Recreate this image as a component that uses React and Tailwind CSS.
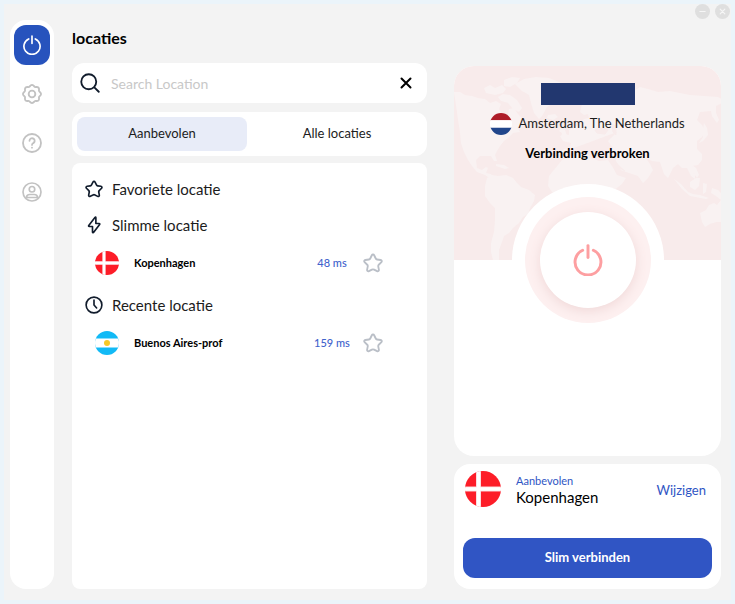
import { useState } from 'react';

const STAR_PATH =
  'M10.6 2.700c.6-1.200 2.200-1.200 2.800 0l1.900 3.900c.3.600.9 1.100 1.600 1.200l4.300.6c1.300.2 1.800 1.700.9 2.600l-3.200 3.100c-.5.5-.7 1.200-.6 1.900l.8 4.200c.2 1.300-1.100 2.200-2.200 1.600l-3.600-1.900c-.8-.4-1.800-.4-2.600 0l-3.600 1.900c-1.100.6-2.400-.3-2.200-1.600l.8-4.200c.1-.7-.1-1.400-.6-1.900L1.900 11c-.9-.9-.4-2.400.9-2.600l4.300-.6c.7-.1 1.300-.6 1.600-1.200z';

function Icon({ className, width = 2.2, children }) {
  return (
    <svg
      viewBox="0 0 24 24"
      fill="none"
      stroke="currentColor"
      strokeWidth={width}
      strokeLinecap="round"
      strokeLinejoin="round"
      aria-hidden="true"
      className={className}
    >
      {children}
    </svg>
  );
}

function StarIcon({ className }) {
  return (
    <Icon className={className}>
      <path d={STAR_PATH} />
    </Icon>
  );
}

function PowerIcon({ className, width }) {
  return (
    <Icon className={className} width={width}>
      <path d="M12 1.200v9" />
      <path d="M8 4.700a9.700 9.700 0 1 0 8 0" />
    </Icon>
  );
}

function GearIcon() {
  const teeth = [0, 45, 90, 135, 180, 225, 270, 315];
  const point = (deg, r) => {
    const a = (deg * Math.PI) / 180;
    return `${(12 + r * Math.cos(a)).toFixed(2)} ${(12 + r * Math.sin(a)).toFixed(2)}`;
  };
  const d =
    `M${point(-22.5, 9.2)}` +
    teeth.map((t) => `C${point(t - 14, 9.2)} ${point(t - 13, 10.9)} ${point(t, 10.9)}C${point(t + 13, 10.9)} ${point(t + 14, 9.2)} ${point(t + 22.5, 9.2)}`).join('') +
    'Z';
  return (
    <Icon className="size-5">
      <path d={d} />
      <circle cx="12" cy="12" r="4" />
    </Icon>
  );
}

function HelpIcon() {
  return (
    <Icon className="size-5">
      <circle cx="12" cy="12" r="10.800" />
      <path d="M9 9.300a3.100 3.100 0 1 1 4.600 2.800c-1 .6-1.600 1.100-1.600 2.200" />
      <path d="M12 17.500v.1" />
    </Icon>
  );
}

function UserIcon() {
  return (
    <Icon className="size-5" width={2}>
      <circle cx="12" cy="12" r="10.800" />
      <circle cx="12" cy="8.700" r="3.300" />
      <path d="M5.500 18.400c0-2.200 1.700-3.400 3.800-3.400h5.400c2.100 0 3.800 1.200 3.800 3.400" />
      <path d="M5.500 18.600h13" />
    </Icon>
  );
}

function DenmarkFlag({ className }) {
  return (
    <svg viewBox="0 0 36 36" role="img" aria-label="Denemarken" className={className}>
      <clipPath id="flag-dk">
        <circle cx="18" cy="18" r="18" />
      </clipPath>
      <g clipPath="url(#flag-dk)">
        <path fill="#fd1d28" d="M0 0h36v36H0z" />
        <path d="M13.500 0v36M0 18h36" stroke="#fbd5d7" strokeWidth="5" />
        <path d="M13.500 0v36M0 18h36" stroke="#fff" strokeWidth="3.400" />
      </g>
    </svg>
  );
}

function ArgentinaFlag({ className }) {
  return (
    <svg viewBox="0 0 24 24" role="img" aria-label="Argentinië" className={className}>
      <clipPath id="flag-ar">
        <circle cx="12" cy="12" r="12" />
      </clipPath>
      <g clipPath="url(#flag-ar)">
        <path fill="#12baf6" d="M0 0h24v24H0z" />
        <path fill="#fff" d="M0 7.500h24v9H0z" />
        <circle cx="12" cy="12" r="3" fill="#f6c928" />
      </g>
    </svg>
  );
}

function NetherlandsFlag({ className }) {
  return (
    <svg viewBox="0 0 24 24" role="img" aria-label="Nederland" className={className}>
      <clipPath id="flag-nl">
        <circle cx="12" cy="12" r="12" />
      </clipPath>
      <g clipPath="url(#flag-nl)">
        <path fill="#ae1c28" d="M0 0h24v8H0z" />
        <path fill="#fff" d="M0 8h24v8H0z" />
        <path fill="#21468b" d="M0 16h24v8H0z" />
      </g>
    </svg>
  );
}

function WorldMap() {
  return (
    <svg viewBox="0 0 267 194" preserveAspectRatio="xMidYMax slice" aria-hidden="true" className="absolute inset-0 size-full">
      <g fill="#f9f2f2">
        <path d="M0 26l6 0 5 3 7 1 6 2 7 1 5 4 6-2 5 3-2 5 4 6 5 1 1-7 5-1 4 6 5 6-2 6-4 1 3 5-7 1-5 5-4 3-4 5-3 5-2 4 2 6-3 0-3-5-6 0-5 0-4 4 1 8 5 2 4-3 2 1-2 5 5 1 3 4-3 1-6-4-8-3-5-6-4-6-4-8-3-9-1-10z" />
        <path d="M30 22l6-3 5 3 7-3 4 4-3 4-8 2-9-2zM44 31l5-3 7 1 7 5 5 8-3 4-6-3-5-6-7-2zM50 14l8-3 8 1-3 5-7 4-6-1z" />
        <path d="M61 18l9-5 12-2 13 1 10 4 7 4-3 9-7 6-9 6-5 9-3 3-5-6-3-10-2-8-7-4zM42 98l8 1 5 3-4 1-9-3z" />
        <path d="M33 112l5-3 6 1 8-1 7 3 4 5 4 4 8 3 6 5-1 6-4 7-2 6-5 3-4 6-6 5-4 5-5 3-2 6-3 8 0 10-6 0-2-8 0-9 3-11 1-12 0-12-5-5-5-7 0-10z" />
        <path d="M104 88l6-5 6-1 1-5-8-2-3-5 5-2 4 1 0-5 6-3 5-3 4-5 5-1-1-4-4 1-4-3 2-8 7-8 8-4 8 2 5 6 4-2 5 2 4-6 8-1 9-6 8 2 10 3 12-1 10 2 10 2 14 1 14 1 7 4-5 3-4 2 0 7 3 7-2 3-5-7-1-5-11 1-3 8 5 5 3 6-3 6-5 4 0 8 5 5 0 6-4 5-6 1 3 7 0 6-4-3-4-8-5 0-4-4-5 4-5 10-4-4-4-12-8-1-6-3 4 6 3 6-5 8-5 5-5-7-15-5-2-1-5-9-1-4-6-5 4-4-5-7 3-3 6-6 2z" />
        <path d="M108 94l6-3 10-2 9-1 4 4 8 3 9-1 4 6 5 9 9 3-4 6-9 7-7 9-2 14-10 14-10 1-5-10 0-12-5-10-7-4-8 2-7-3-4-6 1-10z" />
        <path d="M107 62l4 2 2 6-6 1 1-4-3-2zM94 49l7-1 3 3-5 3-6-2zM250 57l3 5 1 7-5 6-4 2 4-6 0-7zM238 99l4 3 3 7-2 3-4-6z" />
        <path d="M220 113l7 5 7 8 5 2 7 1 9 3-3 1-16-3-8-7zM236 116l6-4 4 0-1 8-4 4-5-3zM249 117l4 1-1 8-3 2zM258 122l6 2 3 3 0 7-5-4-5-3z" />
        <path d="M246 147l6-3 3-5 5-2 3 2 4-5 0 22-4 0-7 2-5 3-3-5z" />
      </g>
      <path d="M141 64l7-3 6 3-3 4-8-1zM158 58l4 2 0 9-3-3zM158 92l5 8 8 5M168 86l7 6" fill="#f8ebeb" stroke="#f8ebeb" strokeWidth="1" />
    </svg>
  );
}

function NavButton({ label, children }) {
  return (
    <button type="button" aria-label={label} className="flex h-[49px] w-full items-center justify-center text-[#c2c2c2]">
      {children}
    </button>
  );
}

function Sidebar() {
  return (
    <nav aria-label="Hoofdmenu" className="mt-4 flex w-11 shrink-0 flex-col items-center rounded-2xl bg-white pt-[5px]">
      <button type="button" aria-label="VPN" className="mb-1 flex h-10 w-9 items-center justify-center rounded-xl bg-[#2753bd] text-white">
        <PowerIcon className="size-5" width={2} />
      </button>
      <NavButton label="Instellingen">
        <GearIcon />
      </NavButton>
      <NavButton label="Help">
        <HelpIcon />
      </NavButton>
      <NavButton label="Account">
        <UserIcon />
      </NavButton>
    </nav>
  );
}

function GroupHeading({ icon, children }) {
  return (
    <h2 className="flex h-9 items-center gap-2 pl-3 text-[15px] text-[#1c1c1c]">
      <span className="flex w-5 justify-center text-[#111c2c]">{icon}</span>
      {children}
    </h2>
  );
}

function LocationRow({ flag, name, ping }) {
  return (
    <div className="flex h-10 items-center pr-11 pl-[23px]">
      {flag}
      <span className="ml-[15px] flex-1 text-[11px] font-bold text-black">{name}</span>
      <span className="mr-1 w-[54px] text-center text-[11px] font-medium text-[#3f63cc]">{ping}</span>
      <button type="button" aria-label={`${name} als favoriet`} className="text-[#babfc7]">
        <StarIcon className="size-5" />
      </button>
    </div>
  );
}

function Locations() {
  const [tab, setTab] = useState('recommended');
  const [query, setQuery] = useState('');
  const tabClass = (active) =>
    active ? 'flex-1 rounded-lg bg-[#e8ecf8] text-[13px] text-[#1c1c1c]' : 'flex-1 rounded-lg text-[13px] text-[#1c1c1c]';
  return (
    <main className="ml-[18px] flex min-w-0 flex-1 flex-col pt-6">
      <h1 className="mb-[15px] text-[16px] leading-5 font-bold text-black">locaties</h1>
      <div className="flex h-10 shrink-0 items-center rounded-xl bg-white pr-[15px] pl-2">
        <label htmlFor="search" className="text-[#111c2c]">
          <Icon className="size-5">
            <circle cx="10.500" cy="10.500" r="9" />
            <path d="M17.500 17.500l5 5" />
          </Icon>
        </label>
        <input
          id="search"
          type="text"
          aria-label="Zoek locatie"
          value={query}
          onChange={(e) => setQuery(e.target.value)}
          placeholder="Search Location"
          className="ml-[11px] h-full min-w-0 flex-1 bg-transparent text-[14px] text-[#1c1c1c] outline-none placeholder:text-[#c8c8c8]"
        />
        <button type="button" aria-label="Wissen" onClick={() => setQuery('')} className="text-black">
          <Icon className="size-3" width={4}>
            <path d="M3 3l18 18M21 3L3 21" />
          </Icon>
        </button>
      </div>
      <div role="tablist" className="mt-[9px] flex h-11 shrink-0 gap-[5px] rounded-xl bg-white p-[5px]">
        <button type="button" role="tab" aria-selected={tab === 'recommended'} onClick={() => setTab('recommended')} className={tabClass(tab === 'recommended')}>
          Aanbevolen
        </button>
        <button type="button" role="tab" aria-selected={tab === 'all'} onClick={() => setTab('all')} className={tabClass(tab === 'all')}>
          Alle locaties
        </button>
      </div>
      <section className="mt-[7px] flex-1 rounded-lg bg-white pt-2">
        <GroupHeading icon={<StarIcon className="size-[18px]" />}>Favoriete locatie</GroupHeading>
        <GroupHeading
          icon={
            <Icon className="size-[18px]">
              <path d="M13.500 1.800L5 12.600c-.5.700-.2 1.400.6 1.400H10v7.200c0 1.100 1 1.400 1.600.6L19.500 11.400c.5-.7.200-1.400-.6-1.400H14.500V2.200c0-.8-.5-.9-1-.4z" />
            </Icon>
          }
        >
          Slimme locatie
        </GroupHeading>
        <LocationRow flag={<DenmarkFlag className="size-6" />} name="Kopenhagen" ping="48 ms" />
        <div className="mt-1">
          <GroupHeading
            icon={
              <Icon className="size-[18px]">
                <circle cx="12" cy="12" r="10.500" />
                <path d="M12 5.500V12l3.500 4" />
              </Icon>
            }
          >
            Recente locatie
          </GroupHeading>
          <LocationRow flag={<ArgentinaFlag className="size-6" />} name="Buenos Aires-prof" ping="159 ms" />
        </div>
      </section>
    </main>
  );
}

function StatusCard() {
  return (
    <section className="flex-1 overflow-hidden rounded-[20px] bg-white">
      <div className="relative flex h-[194px] flex-col items-center bg-[#f8ebeb] pt-[17px]">
        <WorldMap />
        <div className="relative h-[22px] w-[94px] bg-[#22376f]" />
        <p className="relative mt-2 flex h-[22px] items-center gap-[6px] text-[13px] text-[#1c1c1c]">
          <NetherlandsFlag className="size-[22px]" />
          Amsterdam, The Netherlands
        </p>
        <p className="relative mt-2 text-[13px] leading-5 font-bold text-black">Verbinding verbroken</p>
        <div className="absolute bottom-0 left-1/2 flex size-[152px] -translate-x-1/2 translate-y-1/2 items-center justify-center rounded-full bg-white">
          <div className="flex size-[126px] items-center justify-center rounded-full bg-[#fdf0f0]">
            <button
              type="button"
              aria-label="Verbinden"
              className="flex size-24 items-center justify-center rounded-full bg-white text-[#fd9fa1] shadow-[0_3px_12px_#f0d8d8]"
            >
              <PowerIcon className="size-8" width={2.2} />
            </button>
          </div>
        </div>
      </div>
    </section>
  );
}

function ConnectCard() {
  return (
    <section className="mt-2 flex h-[125px] shrink-0 flex-col justify-between rounded-2xl bg-white px-[9px] pt-[7px] pb-[11px]">
      <div className="flex items-center pr-[6px] pl-[2px]">
        <DenmarkFlag className="size-9" />
        <div className="ml-[15px] flex-1">
          <p className="text-[11px] leading-4 text-[#3055c4]">Aanbevolen</p>
          <p className="text-[15px] leading-4 text-black">Kopenhagen</p>
        </div>
        <button type="button" className="pt-1 text-[13px] text-[#3055c4]">
          Wijzigen
        </button>
      </div>
      <button type="button" className="h-10 rounded-xl bg-[#3055c4] text-[13px] font-bold text-white">
        Slim verbinden
      </button>
    </section>
  );
}

function WindowButton({ label, d }) {
  return (
    <button type="button" aria-label={label} className="flex size-[15px] items-center justify-center rounded-full bg-[#dfdfdf] text-[#f6f6f6]">
      <Icon className="size-[7px]" width={4}>
        <path d={d} />
      </Icon>
    </button>
  );
}

export default function App() {
  return (
    <div className="h-screen bg-[#ebf4fa] p-1 font-['Lato','Noto_Sans',sans-serif]">
      <div className="relative flex h-full bg-[#f3f3f3] pr-[10px] pb-[11px] pl-[6px]">
        <Sidebar />
        <Locations />
        <aside className="ml-[27px] flex w-[267px] shrink-0 flex-col pt-[62px]">
          <StatusCard />
          <ConnectCard />
        </aside>
        <div className="absolute top-0 right-px flex gap-[5px]">
          <WindowButton label="Minimaliseren" d="M3 12h18" />
          <WindowButton label="Sluiten" d="M4 4l16 16M20 4L4 20" />
        </div>
      </div>
    </div>
  );
}
